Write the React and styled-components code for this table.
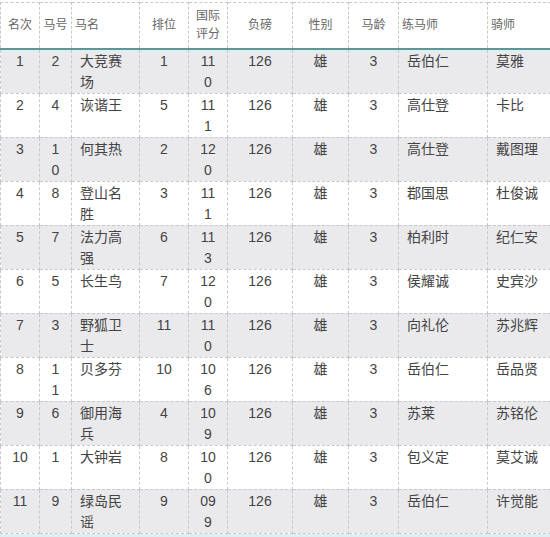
import React from 'react';
import styled, { createGlobalStyle } from 'styled-components';

const GlobalStyle = createGlobalStyle`
  html, body {
    margin: 0;
    padding: 0;
    background: #ffffff;
  }
  body {
    font-family: "Liberation Sans", "Noto Sans CJK SC", sans-serif;
  }
`;

const columns = [
  { key: 'rank', title: '名次', width: 39, align: 'center' },
  { key: 'no', title: '马号', width: 32, align: 'center' },
  { key: 'name', title: '马名', width: 68, align: 'left' },
  { key: 'draw', title: '排位', width: 49, align: 'center' },
  { key: 'rating', title: '国际评分', width: 39, align: 'center' },
  { key: 'weight', title: '负磅', width: 65, align: 'center' },
  { key: 'sex', title: '性别', width: 56, align: 'center' },
  { key: 'age', title: '马龄', width: 50, align: 'center' },
  { key: 'trainer', title: '练马师', width: 89, align: 'left' },
  { key: 'jockey', title: '骑师', width: 63, align: 'left' },
];

const rows = [
  ['1', '2', '大竞赛场', '1', '110', '126', '雄', '3', '岳伯仁', '莫雅'],
  ['2', '4', '诙谐王', '5', '111', '126', '雄', '3', '高仕登', '卡比'],
  ['3', '10', '何其热', '2', '120', '126', '雄', '3', '高仕登', '戴图理'],
  ['4', '8', '登山名胜', '3', '111', '126', '雄', '3', '鄀国思', '杜俊诚'],
  ['5', '7', '法力高强', '6', '113', '126', '雄', '3', '柏利时', '纪仁安'],
  ['6', '5', '长生鸟', '7', '120', '126', '雄', '3', '侯耀诚', '史宾沙'],
  ['7', '3', '野狐卫士', '11', '110', '126', '雄', '3', '向礼伦', '苏兆辉'],
  ['8', '11', '贝多芬', '10', '106', '126', '雄', '3', '岳伯仁', '岳品贤'],
  ['9', '6', '御用海兵', '4', '109', '126', '雄', '3', '苏莱', '苏铭伦'],
  ['10', '1', '大钟岩', '8', '100', '126', '雄', '3', '包义定', '莫艾诚'],
  ['11', '9', '绿岛民谣', '9', '099', '126', '雄', '3', '岳伯仁', '许觉能'],
];

const Wrapper = styled.div`
  width: 550px;
  padding-top: 2px;
  padding-bottom: 3px;
  background: linear-gradient(#ffffff, #ffffff) top / 100% calc(100% - 3px) no-repeat, #dcf0f2;
  border-bottom: 2px solid #5e9597;
`;

const Table = styled.table`
  width: 550px;
  table-layout: fixed;
  border-collapse: collapse;
  color: #444;
`;

const HeadRow = styled.tr`
  height: 46px;
`;

const HeadCell = styled.th`
  box-sizing: border-box;
  padding: 3px 3px;
  font-size: 12px;
  font-weight: normal;
  line-height: 18px;
  color: #666;
  text-align: ${(p) => p.$align};
  vertical-align: middle;
  border: 1px dashed #c8c8c8;
  border-bottom: 2px solid #5e9597;
  word-break: break-all;
`;

const Row = styled.tr`
  height: 44px;
  background: ${(p) => (p.$striped ? '#eaeaed' : '#ffffff')};

  &:first-child td {
    box-shadow: inset 0 2px 0 #dcf0f2;
  }
`;

const Cell = styled.td`
  box-sizing: border-box;
  padding: ${(p) => (p.$align === 'left' ? '1px 9px 0 8px' : '1px 9px 0')};
  font-size: 14px;
  line-height: 21px;
  text-align: ${(p) => p.$align};
  vertical-align: top;
  border: 1px dashed #c8c8c8;
  word-break: break-all;
`;

export default function App() {
  return (
    <>
      <GlobalStyle />
      <Wrapper>
        <Table>
          <colgroup>
            {columns.map((c) => (
              <col key={c.key} style={{ width: c.width }} />
            ))}
          </colgroup>
          <thead>
            <HeadRow>
              {columns.map((c) => (
                <HeadCell key={c.key} $align={c.align}>
                  {c.title}
                </HeadCell>
              ))}
            </HeadRow>
          </thead>
          <tbody>
            {rows.map((r, i) => (
              <Row key={r[0]} $striped={i % 2 === 0}>
                {r.map((v, j) => (
                  <Cell key={columns[j].key} $align={columns[j].align}>
                    {v}
                  </Cell>
                ))}
              </Row>
            ))}
          </tbody>
        </Table>
      </Wrapper>
    </>
  );
}
